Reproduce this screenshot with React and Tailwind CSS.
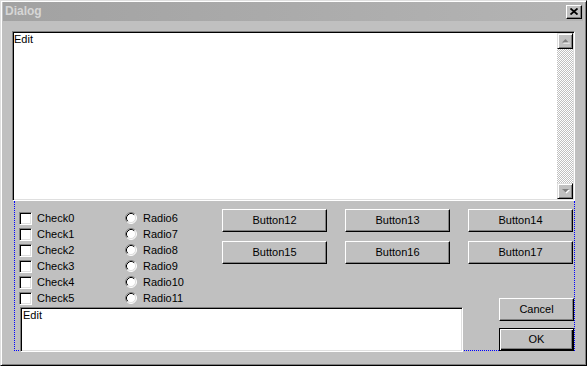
const raised =
  'bg-[#c0c0c0] border-t border-l border-t-white border-l-white border-r border-b border-r-black border-b-black shadow-[inset_-1px_-1px_#808080]';

const sunken =
  'bg-white border-t border-l border-t-[#808080] border-l-[#808080] border-r border-b border-r-white border-b-white shadow-[inset_1px_1px_#000,inset_-1px_-1px_#dfdfdf]';

const Arrow = ({ down }) => (
  <svg width="9" height="6" viewBox="0 0 9 6">
    {down ? (
      <>
        <polygon points="1,1 8,1 4.5,4.5" fill="#fff" transform="translate(1,1)" />
        <polygon points="1,1 8,1 4.5,4.5" fill="#808080" />
      </>
    ) : (
      <>
        <polygon points="1,4.5 8,4.5 4.5,1" fill="#fff" transform="translate(1,1)" />
        <polygon points="1,4.5 8,4.5 4.5,1" fill="#808080" />
      </>
    )}
  </svg>
);

const ScrollButton = ({ down }) => (
  <div
    className={`w-[16px] h-[16px] flex items-center justify-center bg-[#c0c0c0] border-t border-l border-t-[#dfdfdf] border-l-[#dfdfdf] border-r border-b border-r-black border-b-black shadow-[inset_1px_1px_#fff,inset_-1px_-1px_#808080]`}
  >
    <Arrow down={down} />
  </div>
);

const Checkbox = ({ label }) => (
  <div className="flex items-center h-[16px] gap-[5px]">
    <div className={`w-[13px] h-[13px] ${sunken}`} />
    <span>{label}</span>
  </div>
);

const Radio = ({ label }) => (
  <div className="flex items-center h-[16px] gap-[6px]">
    <svg width="12" height="12" viewBox="0 0 12 12">
      <circle cx="6" cy="6" r="5" fill="#fff" />
      <path d="M2.11 9.89 A5.5 5.5 0 0 1 9.89 2.11" fill="none" stroke="#808080" />
      <path d="M9.89 2.11 A5.5 5.5 0 0 1 2.11 9.89" fill="none" stroke="#fff" />
      <path d="M2.82 9.18 A4.5 4.5 0 0 1 9.18 2.82" fill="none" stroke="#000" />
      <path d="M9.18 2.82 A4.5 4.5 0 0 1 2.82 9.18" fill="none" stroke="#dfdfdf" />
    </svg>
    <span>{label}</span>
  </div>
);

const Button = ({ children }) => (
  <div className={`w-[105px] h-[23px] flex items-center justify-center ${raised}`}>
    {children}
  </div>
);

export default function App() {
  const checks = [0, 1, 2, 3, 4, 5];
  const radios = [6, 7, 8, 9, 10, 11];
  const buttons = [12, 13, 14, 15, 16, 17];

  return (
    <div className="w-[587px] h-[366px] flex flex-col bg-[#c0c0c0] border-t border-l border-t-[#dfdfdf] border-l-[#dfdfdf] border-r border-b border-r-black border-b-black shadow-[inset_1px_1px_#fff,inset_-1px_-1px_#808080] pt-[1px] pl-[2px] font-['Liberation_Sans',Arial,sans-serif] text-[11px] leading-[13px] text-black">
      {/* title bar */}
      <div className="w-[580px] h-[19px] flex items-center justify-between pl-[2px] pr-[1px] bg-[linear-gradient(90deg,#a2a2a2,#b4b4b4)]">
        <span className="text-[12px] font-bold text-[#d6d6d6]">Dialog</span>
        <div className={`w-[16px] h-[14px] flex items-center justify-center bg-[#c0c0c0] border-t border-l border-t-white border-l-white border-r border-b border-r-black border-b-black shadow-[inset_-1px_-1px_#808080]`}>
          <svg width="8" height="7" viewBox="0 0 8 7">
            <path d="M0.5 0.5 L7.5 6.5 M7.5 0.5 L0.5 6.5" stroke="#000" strokeWidth="1.8" />
          </svg>
        </div>
      </div>

      {/* top edit */}
      <div className={`ml-[9px] mt-[10px] w-[563px] h-[170px] flex ${sunken}`}>
        <div className="flex-1 pl-[1px] pt-[1px] leading-[12px]">Edit</div>
        <div className="w-[16px] flex flex-col mt-[1px] mb-[1px] mr-[1px]">
          <ScrollButton />
          <div className="flex-1 bg-[image:repeating-conic-gradient(#c0c0c0_0_25%,#ffffff_0_50%)] bg-[length:2px_2px]" />
          <ScrollButton down />
        </div>
      </div>

      {/* lower group */}
      <div className="ml-[11px] w-[561px] h-[150px] border-l border-r border-b border-dotted border-[#0000ff] border-t-0 grid grid-cols-[207px_246px_106px] grid-rows-[106px_43px]">
        <div className="col-start-1 row-start-1 pt-[9px] pl-[4px] flex">
          <div className="w-[106px] flex flex-col">
            {checks.map((n) => (
              <Checkbox key={n} label={`Check${n}`} />
            ))}
          </div>
          <div className="flex flex-col">
            {radios.map((n) => (
              <Radio key={n} label={`Radio${n}`} />
            ))}
          </div>
        </div>

        <div className="col-start-2 col-span-2 row-start-1 self-start mt-[8px] grid grid-cols-[105px_105px_105px] gap-x-[18px] gap-y-[9px]">
          {buttons.map((n) => (
            <Button key={n}>{`Button${n}`}</Button>
          ))}
        </div>

        <div className={`col-start-1 col-span-2 row-start-2 self-start ml-[5px] w-[443px] h-[45px] pl-[2px] pt-[1px] leading-[12px] ${sunken}`}>
          Edit
        </div>

        <div className="col-start-3 row-start-1 row-span-2 self-end justify-self-end mb-[-1px] flex flex-col gap-[7px]">
          <div className={`w-[75px] h-[23px] flex items-center justify-center ${raised}`}>Cancel</div>
          <div className="w-[75px] h-[23px] flex items-center justify-center bg-[#c0c0c0] border border-black shadow-[inset_1px_1px_#fff,inset_-1px_-1px_#000,inset_-2px_-2px_#808080]">
            OK
          </div>
        </div>
      </div>
    </div>
  );
}
